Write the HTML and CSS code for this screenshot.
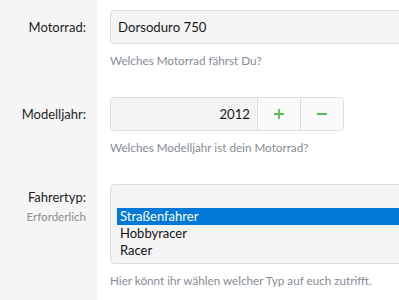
FILE: index.html
```html
<!DOCTYPE html>
<html lang="de">
<head>
<meta charset="utf-8">
<link rel="stylesheet" href="styles.css">
</head>
<body>
<form class="form">
  <div class="row">
    <div class="label-cell"><label class="label">Motorrad:</label></div>
    <div class="field-cell">
      <div class="text-input">Dorsoduro 750</div>
      <div class="help">Welches Motorrad fährst Du?</div>
    </div>
  </div>
  <div class="row">
    <div class="label-cell"><label class="label">Modelljahr:</label></div>
    <div class="field-cell">
      <div class="spin-group">
        <div class="spin-value">2012</div>
        <div class="spin-btn">
          <svg width="12" height="12" viewBox="0 0 12 12"><path d="M6 1v10M1 6h10" stroke="#5cb85c" stroke-width="1.8" fill="none"/></svg>
        </div>
        <div class="spin-btn">
          <svg width="12" height="12" viewBox="0 0 12 12"><path d="M1 6h10" stroke="#5cb85c" stroke-width="1.8" fill="none"/></svg>
        </div>
      </div>
      <div class="help">Welches Modelljahr ist dein Motorrad?</div>
    </div>
  </div>
  <div class="row row-select">
    <div class="label-cell label-cell-tight">
      <label class="label">Fahrertyp:</label>
      <div class="required">Erforderlich</div>
    </div>
    <div class="field-cell">
      <div class="listbox">
        <div class="option option-empty"></div>
        <div class="option option-selected">Straßenfahrer</div>
        <div class="option">Hobbyracer</div>
        <div class="option">Racer</div>
      </div>
      <div class="help">Hier könnt ihr wählen welcher Typ auf euch zutrifft.</div>
    </div>
  </div>
</form>
</body>
</html>
```
FILE: styles.css
```css
* { box-sizing: border-box; }
html, body { margin: 0; padding: 0; }
body {
  font-family: "Segoe UI", Lato, "Open Sans", sans-serif;
  color: #222;
  background: #fff;
  overflow: hidden;
}
.form {
  min-height: 300px;
  background: linear-gradient(to right, #f5f5f5 97px, #fff 97px);
}
.row {
  display: grid;
  grid-template-columns: 97px 1fr;
  height: 87px;
}
.label-cell {
  padding: 18px 11px 0 0;
  text-align: right;
}
.label-cell-tight { padding-top: 14px; }
.label {
  display: block;
  font-size: 13px;
  line-height: 18px;
  color: #1e1e1e;
}
.required {
  font-size: 11.6px;
  line-height: 16px;
  margin-top: 3px;
  color: #8c8c8c;
}
.field-cell {
  padding: 10px 0 0 13px;
  min-width: 0;
}
.text-input {
  width: 340px;
  height: 34px;
  border: 1px solid #dedede;
  border-radius: 4px;
  background: #f4f4f4;
  padding: 0 7px;
  font-size: 13.2px;
  line-height: 32px;
  color: #1a1a1a;
}
.help {
  margin-top: 8px;
  font-size: 11.7px;
  line-height: 17px;
  color: #858b95;
  white-space: nowrap;
}
.spin-group {
  display: flex;
  width: 234px;
  height: 34px;
  border: 1px solid #dedede;
  border-radius: 4px;
  overflow: hidden;
}
.spin-value {
  width: 146px;
  background: #f4f4f4;
  text-align: right;
  padding-right: 7px;
  font-size: 13.2px;
  line-height: 32px;
  color: #1a1a1a;
}
.spin-btn {
  flex: 1;
  display: flex;
  align-items: center;
  justify-content: center;
  background: #fafafa;
  border-left: 1px solid #dedede;
}
.row-select { height: 126px; }
.listbox {
  width: 340px;
  height: 80px;
  border: 1px solid #dedede;
  border-radius: 4px;
  background: #f4f4f4;
  padding: 6px 0 6px 6px;
}
.option {
  height: 17px;
  font-size: 13px;
  line-height: 17px;
  padding-left: 3px;
  color: #111;
}
.option-selected {
  background: #0078d7;
  color: #fff;
}
```
